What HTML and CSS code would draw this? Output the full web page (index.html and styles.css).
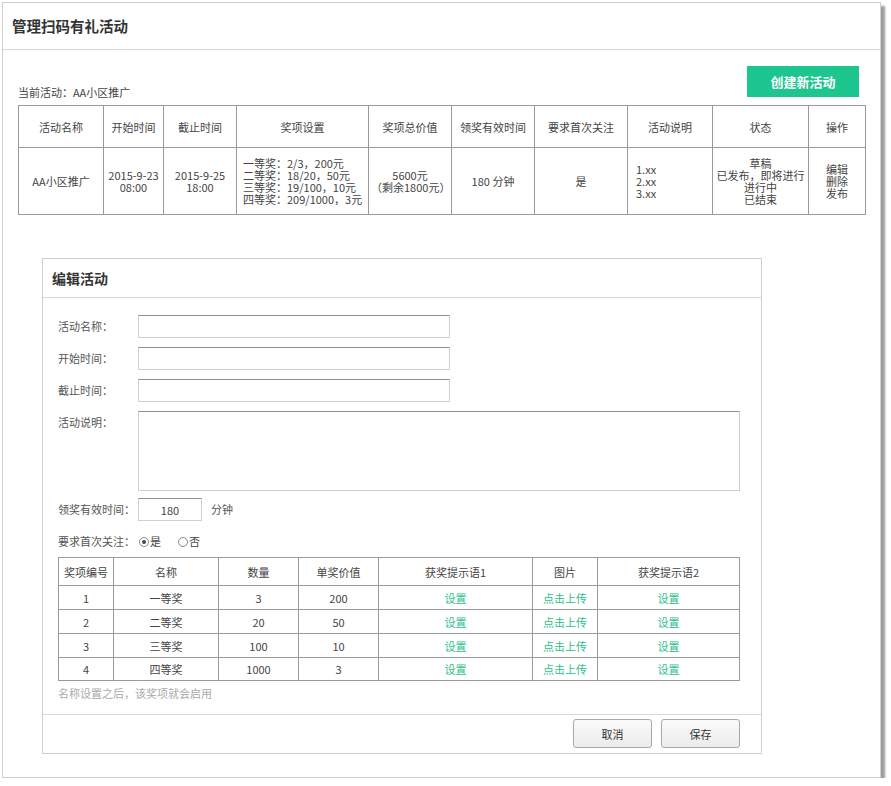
FILE: index.html
```html
<!DOCTYPE html>
<html lang="zh-CN">
<head>
<meta charset="utf-8">
<title>管理扫码有礼活动</title>
<link rel="stylesheet" href="styles.css">
</head>
<body>
<div class="page">
  <div class="page-head"><h1 class="page-title">管理扫码有礼活动</h1></div>
  <div class="page-body">
    <div class="toolbar">
      <div class="current">当前活动：AA小区推广</div>
      <button class="btn-create">创建新活动</button>
    </div>
    <table class="list">
      <colgroup>
        <col style="width:85px"><col style="width:60px"><col style="width:73px"><col style="width:132px"><col style="width:83px"><col style="width:83px"><col style="width:93px"><col style="width:85px"><col style="width:96px"><col style="width:57px">
      </colgroup>
      <thead>
        <tr><th>活动名称</th><th>开始时间</th><th>截止时间</th><th>奖项设置</th><th>奖项总价值</th><th>领奖有效时间</th><th>要求首次关注</th><th>活动说明</th><th>状态</th><th>操作</th></tr>
      </thead>
      <tbody>
        <tr>
          <td>AA小区推广</td>
          <td>2015-9-23<br>08:00</td>
          <td>2015-9-25<br>18:00</td>
          <td class="left prize">一等奖：2/3，200元<br>二等奖：18/20，50元<br>三等奖：19/100，10元<br>四等奖：209/1000，3元</td>
          <td>5600元<br>（剩余1800元）</td>
          <td>180 分钟</td>
          <td>是</td>
          <td class="left desc">1.xx<br>2.xx<br>3.xx</td>
          <td>草稿<br>已发布，即将进行<br>进行中<br>已结束</td>
          <td>编辑<br>删除<br>发布</td>
        </tr>
      </tbody>
    </table>

    <div class="editor">
      <div class="editor-head"><h2 class="editor-title">编辑活动</h2></div>
      <div class="editor-body">
        <div class="row"><span class="label">活动名称：</span><input class="field" type="text"></div>
        <div class="row"><span class="label">开始时间：</span><input class="field" type="text"></div>
        <div class="row"><span class="label">截止时间：</span><input class="field" type="text"></div>
        <div class="row row-area"><span class="label">活动说明：</span><textarea class="area"></textarea></div>
        <div class="row"><span class="label">领奖有效时间：</span><input class="field short" type="text" value="180"><span class="unit">分钟</span></div>
        <div class="row row-radio"><span class="label">要求首次关注：</span>
          <span class="radio checked"></span><span class="radio-text">是</span>
          <span class="radio second"></span><span class="radio-text">否</span>
        </div>
        <table class="prizes">
          <colgroup>
            <col style="width:55px"><col style="width:105px"><col style="width:80px"><col style="width:80px"><col style="width:154px"><col style="width:65px"><col style="width:142px">
          </colgroup>
          <thead>
            <tr><th>奖项编号</th><th>名称</th><th>数量</th><th>单奖价值</th><th>获奖提示语1</th><th>图片</th><th>获奖提示语2</th></tr>
          </thead>
          <tbody>
            <tr><td>1</td><td>一等奖</td><td>3</td><td>200</td><td class="link">设置</td><td class="link">点击上传</td><td class="link">设置</td></tr>
            <tr><td>2</td><td>二等奖</td><td>20</td><td>50</td><td class="link">设置</td><td class="link">点击上传</td><td class="link">设置</td></tr>
            <tr><td>3</td><td>三等奖</td><td>100</td><td>10</td><td class="link">设置</td><td class="link">点击上传</td><td class="link">设置</td></tr>
            <tr class="last"><td>4</td><td>四等奖</td><td>1000</td><td>3</td><td class="link">设置</td><td class="link">点击上传</td><td class="link">设置</td></tr>
          </tbody>
        </table>
        <div class="note">名称设置之后，该奖项就会启用</div>
      </div>
      <div class="editor-foot">
        <button class="btn">取消</button>
        <button class="btn">保存</button>
      </div>
    </div>
  </div>
</div>
</body>
</html>
```
FILE: styles.css
```css
* { box-sizing: border-box; }
html, body { margin: 0; padding: 0; background: #fff; }
body {
  font-family: "Noto Sans CJK SC", "Noto Sans", "Liberation Sans", sans-serif;
  font-size: 11px;
  color: #444;
}
.page {
  margin: 2px 0 0 2px;
  width: 879px;
  height: 776px;
  border: 1px solid #cfcfcf;
  box-shadow: 4px 4px 2px #9d9d9d;
  background: #fff;
}
.page-head {
  height: 47px;
  border-bottom: 1px solid #d8d8d8;
  padding-left: 9px;
  display: flex;
  align-items: center;
}
.page-title {
  margin: 0;
  font-size: 14.5px;
  font-weight: bold;
  color: #333;
  line-height: 20px;
}
.page-body { padding: 0 14px 0 15px; }
.toolbar {
  display: flex;
  justify-content: space-between;
  align-items: flex-end;
  margin-top: 16px;
}
.current {
  line-height: 14px;
  margin-bottom: 6px;
  color: #444;
}
.btn-create {
  width: 112px;
  height: 31px;
  margin: 0 7px 8px 0;
  border: 0;
  background: #1dc58f;
  color: #fff;
  font-family: inherit;
  font-size: 13px;
  font-weight: bold;
  padding: 0;
}
table {
  border-collapse: collapse;
  table-layout: fixed;
}
.list { width: 847px; }
.list th, .list td {
  border: 1px solid #9a9a9a;
  text-align: center;
  font-weight: normal;
  line-height: 12px;
  padding: 0 2px;
  color: #444;
}
.list th { height: 42px; }
.list td { height: 67px; }
.list td.left { text-align: left; }
.list td.prize { padding-left: 6px; }
.list td.desc { padding-left: 8px; }

.editor {
  margin: 43px 0 0 24px;
  width: 720px;
  border: 1px solid #cfcfcf;
}
.editor-head {
  height: 39px;
  border-bottom: 1px solid #d8d8d8;
  padding-left: 9px;
  display: flex;
  align-items: center;
}
.editor-title {
  margin: 0;
  font-size: 14px;
  font-weight: bold;
  color: #333;
  line-height: 20px;
}
.editor-body { padding: 17px 0 14px 15px; }
.row {
  display: flex;
  align-items: center;
  margin-bottom: 9px;
  line-height: 23px;
  color: #555;
}
.label { width: 80px; flex: none; }
.field {
  width: 312px;
  height: 23px;
  border: 1px solid #d0d0d0;
  border-top-color: #8f8f8f;
  padding: 0 4px;
  font-family: inherit;
  font-size: 11px;
  color: #444;
  outline: none;
}
.field.short { width: 64px; text-align: center; }
.unit { margin-left: 9px; }
.row-area { align-items: flex-start; margin-bottom: 7px; }
.area {
  width: 602px;
  height: 80px;
  border: 1px solid #d0d0d0;
  border-top-color: #8f8f8f;
  resize: none;
  outline: none;
}
.row-radio { margin-bottom: 4px; }
.radio {
  width: 10px;
  height: 10px;
  border-radius: 50%;
  border: 1px solid #8a8a8a;
  margin-left: 1px;
  margin-right: 1px;
  position: relative;
  flex: none;
  background: #fff;
}
.radio.checked::after {
  content: "";
  position: absolute;
  left: 2px; top: 2px;
  width: 4px; height: 4px;
  border-radius: 50%;
  background: #444;
}
.radio.second { margin-left: 17px; }
.radio-text { color: #444; }
.prizes { width: 681px; }
.prizes th, .prizes td {
  border: 1px solid #9a9a9a;
  text-align: center;
  font-weight: normal;
  line-height: 14px;
  padding: 0;
  color: #444;
}
.prizes th { height: 28px; }
.prizes td { height: 24px; }
.prizes tr.last td { height: 23px; }
.prizes td.link { color: #2ebf8d; }
.note {
  margin-top: 5px;
  line-height: 14px;
  color: #aaa;
}
.editor-foot {
  border-top: 1px solid #d8d8d8;
  height: 39px;
  padding: 4px 21px 0 0;
  display: flex;
  justify-content: flex-end;
  gap: 9px;
}
.btn {
  width: 79px;
  height: 29px;
  border: 1px solid #a9a9a9;
  border-radius: 3px;
  background: linear-gradient(#fbfbfb, #ebebeb);
  font-family: inherit;
  font-size: 11px;
  color: #333;
  padding: 0;
}
```
